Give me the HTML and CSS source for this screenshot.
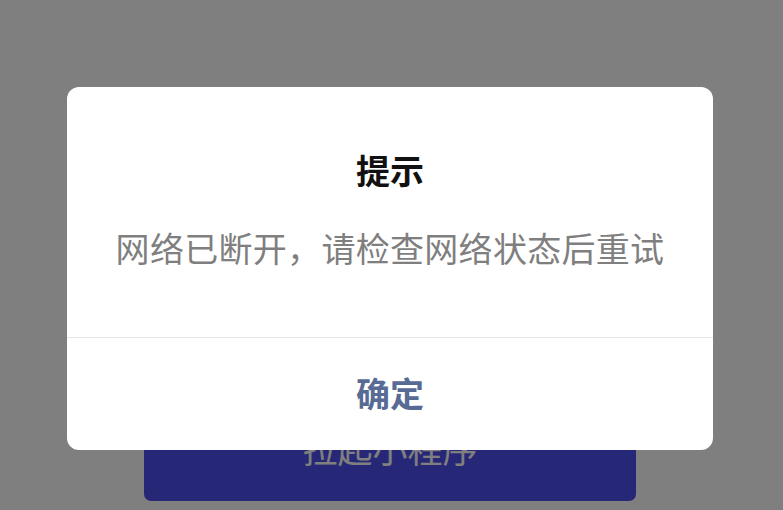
FILE: index.html
```html
<!DOCTYPE html>
<html lang="zh-CN">
<head>
<meta charset="utf-8">
<link rel="stylesheet" href="styles.css">
</head>
<body>
<main class="page">
  <button class="launch">拉起小程序</button>
</main>
<div class="mask">
  <div class="dialog">
    <div class="dialog-body">
      <div class="title">提示</div>
      <div class="message">网络已断开，请检查网络状态后重试</div>
    </div>
    <div class="dialog-footer">
      <span class="confirm">确定</span>
    </div>
  </div>
</div>
</body>
</html>
```
FILE: styles.css
```css
html, body {
  margin: 0;
  padding: 0;
  width: 783px;
  height: 510px;
  overflow: hidden;
  font-family: "Noto Sans CJK SC", "Noto Sans", sans-serif;
}
.page {
  height: 510px;
  background: #ffffff;
  display: flex;
  flex-direction: column;
  justify-content: flex-end;
  align-items: flex-start;
  padding: 0 0 9px 144px;
  box-sizing: border-box;
}
.launch {
  width: 492px;
  height: 100px;
  border: none;
  border-radius: 7px;
  background: #4e4eee;
  color: #ffffff;
  font-family: inherit;
  font-size: 35px;
  line-height: 40px;
  padding: 0 0 33px 0;
  display: flex;
  align-items: flex-end;
  justify-content: center;
}
.mask {
  position: absolute;
  inset: 0;
  background: rgba(0, 0, 0, 0.5);
  display: flex;
  align-items: flex-start;
  padding-top: 87px;
  padding-left: 67px;
  box-sizing: border-box;
}
.dialog {
  width: 646px;
  background: #ffffff;
  border-radius: 12px;
  overflow: hidden;
}
.dialog-body {
  padding: 59px 30px 65px;
  display: flex;
  flex-direction: column;
  align-items: center;
  gap: 30px;
  border-bottom: 1px solid #e6e6e6;
}
.title {
  font-size: 34px;
  line-height: 48px;
  font-weight: 700;
  color: #111111;
}
.message {
  font-size: 34px;
  line-height: 48px;
  color: #7f7f7f;
  letter-spacing: 0.3px;
}
.dialog-footer {
  height: 112px;
  display: flex;
  align-items: center;
  justify-content: center;
}
.confirm {
  font-size: 34px;
  font-weight: 700;
  color: #576b95;
  line-height: 48px;
  padding-bottom: 3px;
}
```
